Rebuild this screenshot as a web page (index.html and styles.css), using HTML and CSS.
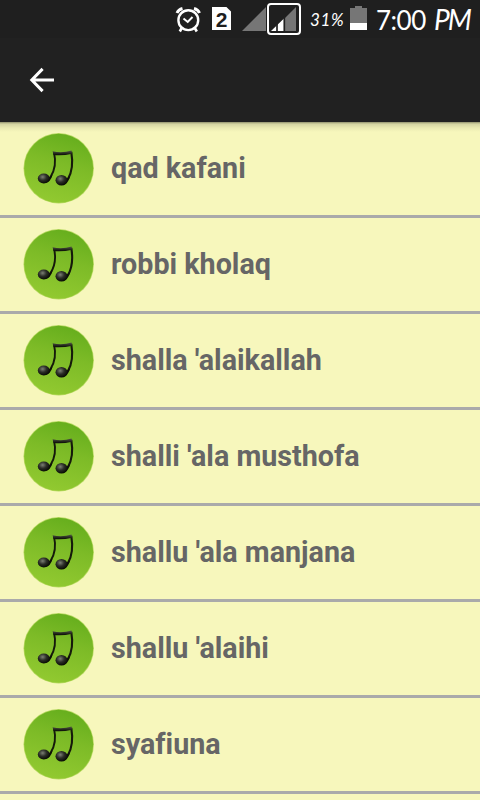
FILE: index.html
```html
<!DOCTYPE html>
<html lang="id">
<head>
    <meta charset="UTF-8">
    <meta name="viewport" content="width=device-width, initial-scale=1.0">
    <title>Sholawat</title>
    <link rel="stylesheet" href="styles.css">
</head>
<body>
    <!-- Shared song icon -->
    <svg class="defs" width="0" height="0">
        <defs>
            <linearGradient id="green" x1="0.75" y1="0" x2="0.45" y2="1">
                <stop offset="0" stop-color="#64ad1c"/>
                <stop offset="0.45" stop-color="#7dbb27"/>
                <stop offset="1" stop-color="#91c930"/>
            </linearGradient>
            <radialGradient id="ball" cx="0.4" cy="0.35" r="0.65">
                <stop offset="0" stop-color="#7c8074"/>
                <stop offset="0.5" stop-color="#2c2e28"/>
                <stop offset="1" stop-color="#080b03"/>
            </radialGradient>
            <linearGradient id="beam" x1="0" y1="0" x2="0" y2="1">
                <stop offset="0" stop-color="#55594a"/>
                <stop offset="1" stop-color="#080b03"/>
            </linearGradient>
        </defs>
        <symbol id="song" viewBox="0 0 72 72">
            <circle cx="35.7" cy="36.3" r="35.2" fill="#b9da62"/>
            <circle cx="35.7" cy="36.3" r="34.5" fill="url(#green)"/>
            <path d="M31 20.5 C33 29 32 38 27.5 45" fill="none" stroke="#15190b" stroke-width="1.9"/>
            <path d="M48.3 20 C50 30 49 40 45 47" fill="none" stroke="#15190b" stroke-width="2.1"/>
            <path d="M29.6 19.2 Q39 21.6 48.6 18.4 L49.2 21.7 Q40 23.8 30.6 23 Z" fill="url(#beam)"/>
            <path d="M22 51 Q27.5 50.5 29.5 43 L25.5 45.5 Z" fill="#0b0e05"/>
            <ellipse cx="20.8" cy="46.5" rx="6" ry="5" fill="url(#ball)"/>
            <path d="M39.5 53 Q45 52.3 47 44.5 L43 47 Z" fill="#0b0e05"/>
            <ellipse cx="38.5" cy="48.3" rx="6" ry="5.2" fill="url(#ball)"/>
        </symbol>
    </svg>

    <div class="status-bar">
        <svg class="alarm" width="26" height="28" viewBox="0 0 26 28" fill="none" stroke="#fff">
            <circle cx="13.3" cy="15.2" r="9.9" stroke-width="2.4"/>
            <path d="M2 8 Q3.5 4.5 7.5 3.5 M24.5 8 Q23 4.5 19 3.5" stroke-width="3"/>
            <path d="M7 22.5 L4.8 26.5 M19.5 22.5 L21.8 26.5" stroke-width="2.6"/>
            <path d="M8.5 13.5 L12.7 17 L17.5 12" stroke-width="2"/>
        </svg>
        <div class="sim">2</div>
        <svg class="signal" width="24" height="24" viewBox="0 0 24 24">
            <path d="M0 24 L24 0 V24 Z" fill="#767676"/>
        </svg>
        <div class="signal-box">
            <svg width="26" height="24" viewBox="0 0 26 24">
                <path d="M1 24 L25 0 V24 Z" fill="#767676"/>
                <path d="M0 24 L13 11.5 V24 Z" fill="#fff"/>
                <path d="M6 16 V24 M13.3 9 V24" stroke="#202020" stroke-width="1.7"/>
            </svg>
        </div>
        <div class="percent">31%</div>
        <svg class="battery" width="17" height="24" viewBox="0 0 17 24">
            <path d="M5 0 H12 V2 H17 V24 H0 V2 H5 Z" fill="#767676"/>
            <rect y="17" width="17" height="7" fill="#fff"/>
        </svg>
        <div class="clock"><span class="time">7:00</span><span class="ampm">PM</span></div>
    </div>

    <div class="toolbar">
        <svg width="26" height="26" viewBox="0 0 26 26" fill="none" stroke="#fff" stroke-width="3">
            <path d="M13.6 1.9 L2.8 13 L13.6 24.1 M2.8 13 H25"/>
        </svg>
    </div>

    <div class="list">
        <div class="row"><svg class="icon"><use href="#song"/></svg><span class="title">qad kafani</span></div>
        <div class="row"><svg class="icon"><use href="#song"/></svg><span class="title">robbi kholaq</span></div>
        <div class="row"><svg class="icon"><use href="#song"/></svg><span class="title">shalla 'alaikallah</span></div>
        <div class="row"><svg class="icon"><use href="#song"/></svg><span class="title">shalli 'ala musthofa</span></div>
        <div class="row"><svg class="icon"><use href="#song"/></svg><span class="title">shallu 'ala manjana</span></div>
        <div class="row"><svg class="icon"><use href="#song"/></svg><span class="title">shallu 'alaihi</span></div>
        <div class="row"><svg class="icon"><use href="#song"/></svg><span class="title">syafiuna</span></div>
    </div>
</body>
</html>
```

FILE: styles.css
```css
body {
    margin: 0;
    height: 800px;
    overflow: hidden;
    display: flex;
    flex-direction: column;
    background-color: #f7f7bc;
    font-family: Roboto, sans-serif;
}

.defs {
    position: absolute;
}

/* Status bar */
.status-bar {
    height: 38px;
    flex-shrink: 0;
    display: flex;
    align-items: center;
    box-sizing: border-box;
    padding-left: 175px;
    background-color: #1f1f1f;
    color: white;
    white-space: nowrap;
}

.status-bar svg {
    display: block;
    flex-shrink: 0;
}

.sim {
    width: 19px;
    height: 23px;
    margin-left: 11px;
    margin-bottom: 1px;
    flex-shrink: 0;
    background-color: white;
    color: #1f1f1f;
    font: bold 21px/25px "Liberation Sans", sans-serif;
    text-align: center;
    clip-path: polygon(0 0, 76% 0, 100% 20%, 100% 100%, 0 100%);
}

.signal {
    margin-left: 11px;
}

.signal-box {
    display: flex;
    align-items: center;
    justify-content: center;
    box-sizing: border-box;
    width: 34px;
    height: 32px;
    margin-left: 1px;
    flex-shrink: 0;
    border: 2px solid white;
    border-radius: 4px;
}

.percent {
    width: 41px;
    padding: 1px 0 0 9px;
    box-sizing: border-box;
    flex-shrink: 0;
    font: italic 17px/38px Lato, sans-serif;
    letter-spacing: 0.6px;
}

.battery {
    margin-left: 8px;
    margin-bottom: 2px;
}

.clock {
    display: flex;
    align-items: baseline;
    margin-left: 9px;
    font: 26px/36px Lato, sans-serif;
}

.time {
    width: 58px;
    letter-spacing: -0.5px;
}

.ampm {
    font-style: italic;
    font-size: 28px;
    letter-spacing: -2px;
}

/* Toolbar */
.toolbar {
    height: 84px;
    flex-shrink: 0;
    display: flex;
    align-items: center;
    padding-left: 29px;
    background-color: #212121;
}

/* Song list, with the toolbar shadow on its top edge */
.list {
    background: linear-gradient(rgba(0, 0, 0, 0.42), rgba(0, 0, 0, 0.14) 2px, rgba(0, 0, 0, 0.05) 6px, transparent 10px) no-repeat;
}

.row {
    display: flex;
    align-items: center;
    box-sizing: border-box;
    height: 96px;
    padding: 0 0 1px 23px;
    border-bottom: 3px solid #aaaaaa;
}

.icon {
    width: 72px;
    height: 72px;
    flex-shrink: 0;
}

.title {
    margin-left: 16px;
    padding-bottom: 1px;
    color: #666666;
    font-size: 30px;
    font-weight: bold;
    font-variant-ligatures: none;
    line-height: 36px;
    white-space: nowrap;
    /* slightly condensed */
    transform: scaleX(0.956);
    transform-origin: left;
}
```
